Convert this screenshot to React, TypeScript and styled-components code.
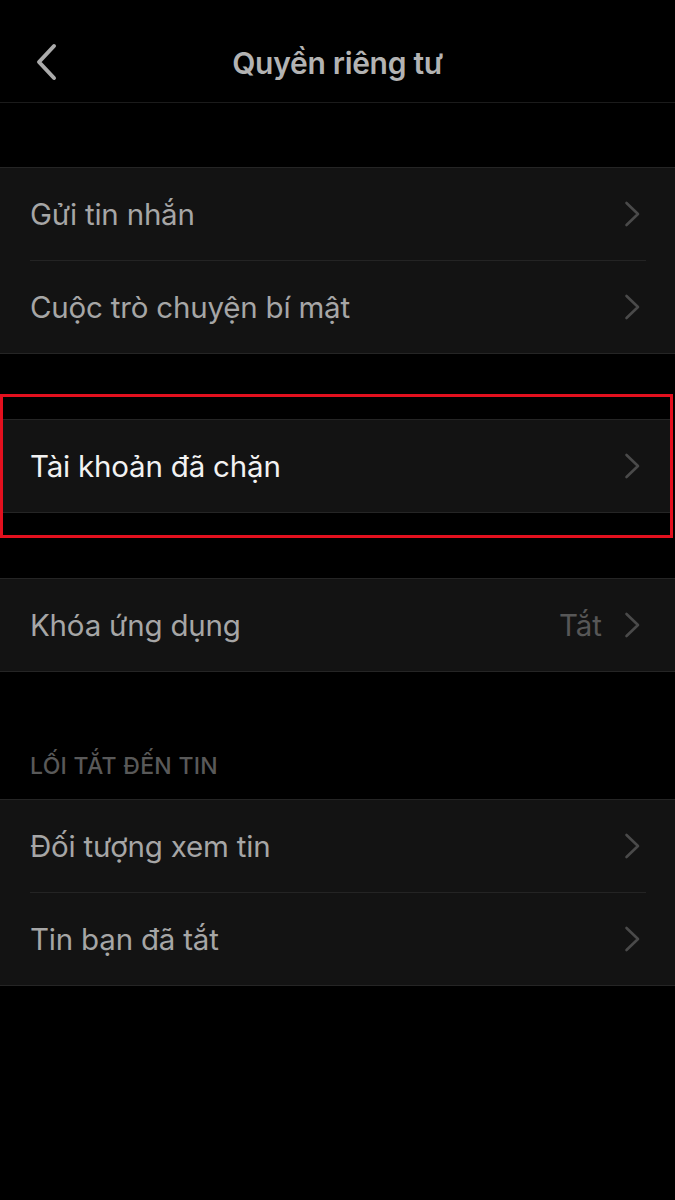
import React from 'react';
import styled, { createGlobalStyle } from 'styled-components';

const GlobalStyle = createGlobalStyle`
  html, body {
    margin: 0;
    padding: 0;
    background: #000;
  }
  body {
    font-family: Inter, Roboto, "Noto Sans", sans-serif;
    -webkit-font-smoothing: antialiased;
  }
`;

const Page = styled.div`
  width: 675px;
  min-height: 1200px;
  background: #000;
  display: flex;
  flex-direction: column;
`;

const Header = styled.header`
  height: 103px;
  box-sizing: border-box;
  padding-top: 24px;
  display: flex;
  align-items: center;
  justify-content: center;
  position: relative;
  border-bottom: 1px solid #1b1b1b;
`;

const BackButton = styled.button`
  position: absolute;
  left: 30px;
  top: 40px;
  width: 32px;
  height: 44px;
  padding: 0;
  border: none;
  background: none;
  display: flex;
  align-items: center;
  justify-content: center;
`;

const Title = styled.h1`
  margin: 0;
  font-size: 30px;
  font-weight: 600;
  color: #b3b3b3;
  letter-spacing: -0.3px;
`;

const Gap = styled.div<{ h: number }>`
  height: ${p => p.h}px;
`;

const Group = styled.div`
  background: #131313;
  border-top: 1px solid #252525;
  border-bottom: 1px solid #252525;
`;

const Row = styled.div`
  height: 92px;
  display: flex;
  align-items: center;
  padding: 0 35px 0 30px;

  & + & {
    border-top: 1px solid #242424;
    margin-left: 30px;
    margin-right: 29px;
    padding-left: 0;
    padding-right: 6px;
  }
`;

const Label = styled.span<{ bright?: boolean }>`
  flex: 1;
  font-size: 29.5px;
  color: ${p => (p.bright ? '#f2f2f2' : '#a6a6a6')};
  letter-spacing: -0.2px;
`;

const Value = styled.span`
  font-size: 29.5px;
  color: #575757;
  margin-right: 22px;
`;

const Highlight = styled.div`
  border: 3px solid #e3101e;
  margin-right: 2px;
  padding: 22px 0 22px;

  ${Row} {
    padding-left: 27px;
    padding-right: 30px;
  }
`;

const SectionLabel = styled.div`
  height: 127px;
  display: flex;
  align-items: flex-end;
  padding: 0 0 19px 30px;
  box-sizing: border-box;
  font-size: 23px;
  font-weight: 500;
  color: #595959;
  letter-spacing: 0.3px;
`;

const Chevron = () => (
  <svg width="16" height="26" viewBox="0 0 16 26" fill="none">
    <path d="M2.5 2 L14 13 L2.5 24" stroke="#4a4a4a" strokeWidth="2.6" strokeLinecap="round" strokeLinejoin="round" />
  </svg>
);

const BackIcon = () => (
  <svg width="24" height="38" viewBox="0 0 24 38" fill="none">
    <path d="M20 3 L5 19 L20 35" stroke="#ababab" strokeWidth="4" strokeLinecap="round" strokeLinejoin="round" />
  </svg>
);

type Item = { label: string; value?: string };

const SettingRow: React.FC<{ item: Item; bright?: boolean }> = ({ item, bright }) => (
  <Row>
    <Label bright={bright}>{item.label}</Label>
    {item.value && <Value>{item.value}</Value>}
    <Chevron />
  </Row>
);

const App: React.FC = () => {
  return (
    <>
      <GlobalStyle />
      <Page>
        <Header>
          <BackButton aria-label="Quay lại">
            <BackIcon />
          </BackButton>
          <Title>Quyền riêng tư</Title>
        </Header>

        <Gap h={64} />
        <Group>
          <SettingRow item={{ label: 'Gửi tin nhắn' }} />
          <SettingRow item={{ label: 'Cuộc trò chuyện bí mật' }} />
        </Group>

        <Gap h={40} />
        <Highlight>
          <Group>
            <SettingRow item={{ label: 'Tài khoản đã chặn' }} bright />
          </Group>
        </Highlight>

        <Gap h={40} />
        <Group>
          <SettingRow item={{ label: 'Khóa ứng dụng', value: 'Tắt' }} />
        </Group>

        <SectionLabel>LỐI TẮT ĐẾN TIN</SectionLabel>
        <Group>
          <SettingRow item={{ label: 'Đối tượng xem tin' }} />
          <SettingRow item={{ label: 'Tin bạn đã tắt' }} />
        </Group>
      </Page>
    </>
  );
};

export default App;
